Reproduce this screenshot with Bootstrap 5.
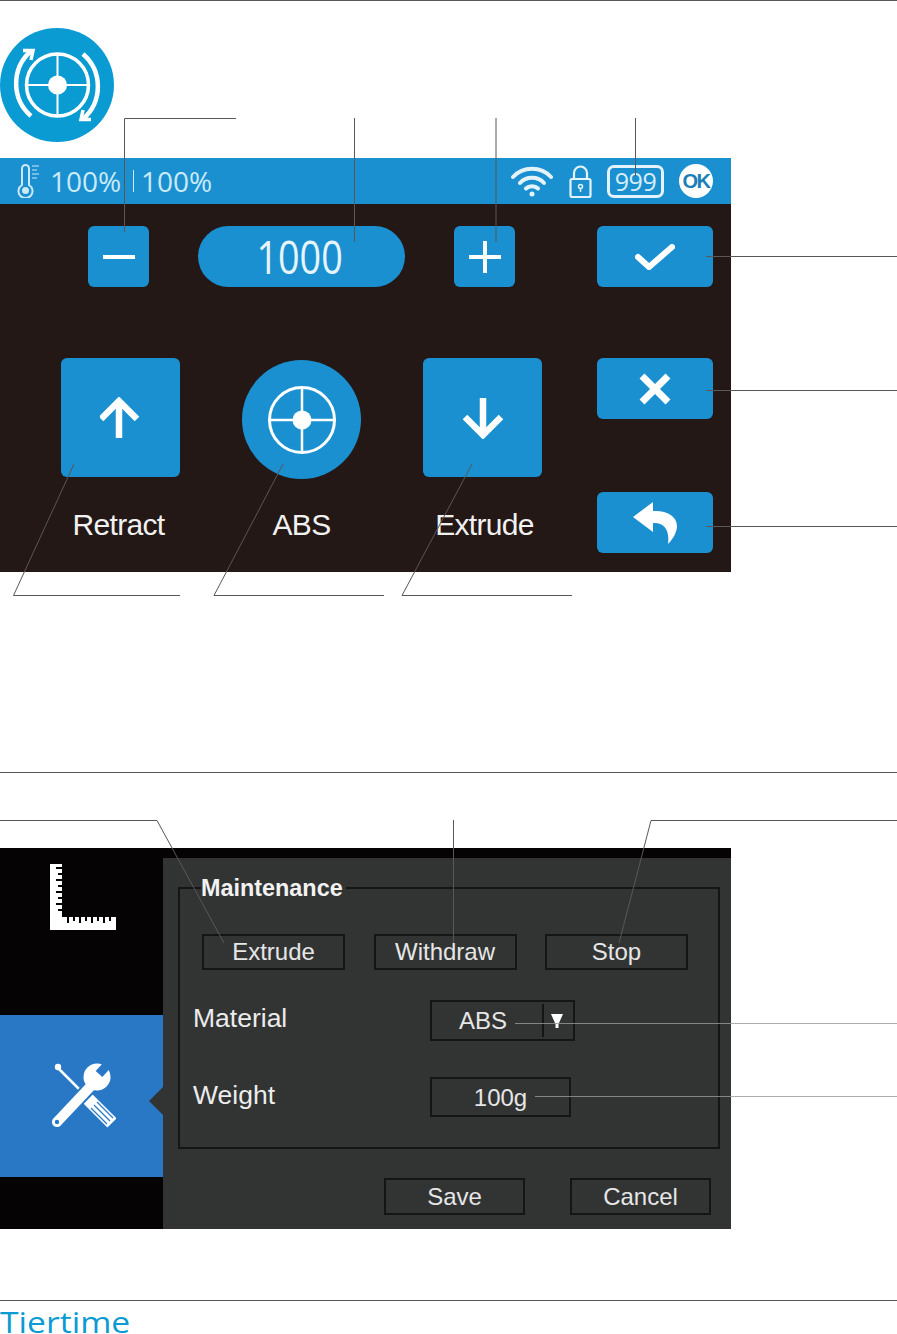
<!doctype html>
<html lang="en">
<head>
<meta charset="utf-8">
<title>Tiertime manual page</title>
<link href="https://cdn.jsdelivr.net/npm/bootstrap@5.3.0/dist/css/bootstrap.min.css" rel="stylesheet">
<style>
html,body{margin:0;background:#fff;}
body{width:897px;height:1334px;overflow:hidden;font-family:"Liberation Sans",Arial,sans-serif;}
.sheet{width:897px;height:1334px;overflow:hidden;}
.rule{height:1px;margin:0;border:0;background:#595757;opacity:1;}
.rule-a{margin-top:200px;}
.rule-b{margin-top:71px;}
.brand-mark{display:block;width:114px;height:114px;margin-top:27px;margin-bottom:16px;}
.leaders{top:0;left:0;width:897px;height:1334px;pointer-events:none;}

/* touch screen */
.touch{width:731px;height:414px;background:#231815;color:#fff;}
.status{height:46px;background:#1a90d0;color:#cbe9f7;padding-left:17px;padding-right:18px;font-family:"Open Sans",sans-serif;font-weight:400;font-size:28px;line-height:46px;}
.pct{width:72px;margin-left:10px;white-space:nowrap;}
.pct-sep{width:1px;height:22px;background:#cbe9f7;margin:0 -3px 0 11px;}
.count{width:57px;height:33px;border:3px solid #e4f3fa;border-radius:7px;font-family:"Open Sans",sans-serif;font-weight:400;font-size:25px;line-height:26px;text-align:center;color:#d7eef8;margin-left:15px;letter-spacing:-.5px;}
.okdot{width:34px;height:34px;border-radius:50%;background:#fff;color:#1a7fb8;font-family:"Liberation Sans",sans-serif;font-weight:700;font-size:20px;line-height:34px;text-align:center;margin-left:15px;letter-spacing:-1.5px;}
.left-pane{width:597px;padding-top:22px;}
.top-row{padding-left:88px;column-gap:49px;}
.tbtn{padding:0;border:0;background:#1a90d0;border-radius:6px;color:#fff;height:61px;display:flex;align-items:center;justify-content:center;}
.tbtn:hover,.tbtn:active{background:#1a90d0;color:#fff;}
.sq{width:61px;}
.wide{width:116px;}
.pill{width:207px;height:61px;border-radius:31px;background:#1a90d0;color:#e6f4fb;font-family:"Open Sans",sans-serif;font-weight:400;font-size:46px;line-height:61px;text-align:center;padding-right:3px;}
.pill-num{display:inline-block;transform:scaleX(.82);}
.tiles{margin-top:71px;padding-left:61px;column-gap:62px;}
.tile-col{width:119px;}
.tile{width:119px;height:119px;}
.round{border-radius:50%;margin-top:2px;margin-bottom:-2px;}
.tile-label{font-size:30px;line-height:36px;margin-top:30px;letter-spacing:-.7px;text-align:center;color:#f1f1f1;white-space:nowrap;}
.right-pane{padding-top:22px;}
.gap-x{margin-top:71px;}
.gap-back{margin-top:73px;}

/* desktop dialog */
.dialog{width:731px;height:381px;margin-top:75px;background:#323434;color:#e8e8e8;}
.rail{width:163px;background:#050303;}
.rail-top{height:167px;padding:16px 0 0 50px;}
.rail-on{height:162px;background:#2878c5;position:relative;padding:46px 0 0 50px;}
.rail-on::after{content:"";position:absolute;right:0;top:72px;border:14px solid transparent;border-right-color:#323434;border-left:0;}
.pane{border-top:10px solid #050303;}
.group{width:542px;height:273px;margin:18px 0 0 15px;padding:0 0 30px 13px;border:2px solid #151515;}
.group legend{float:none;width:auto;margin:0 0 34px 8px;padding:0 3px 0 0;font-size:23.4px;font-weight:700;line-height:24px;color:#f2f2f2;}
.cmd-row{padding-left:9px;column-gap:28.500px;}
.dbtn{width:143px;height:36px;padding:0;border:2px solid #151515;border-radius:0;background:transparent;color:#e6e6e6;font-size:24px;line-height:32px;}
.dbtn:hover,.dbtn:active{background:transparent;color:#e6e6e6;border-color:#151515;}
.fld-label{width:237px;font-size:26.5px;line-height:36px;color:#ececec;}
.fld{height:41px;border:2px solid #151515;font-size:24px;line-height:37px;text-align:center;color:#e6e6e6;}
.pick-row{margin-top:30px;}
.entry-row{margin-top:36px;}
.pick{width:145px;}
.pick-val{width:110px;padding-right:8px;}
.pick-arrow{flex:1;height:33px;margin-top:2px;border-left:2px solid #151515;padding-right:3px;}
.entry{width:141px;height:40px;}
.foot{margin:29px 20px 0 0;column-gap:45px;}
.foot .dbtn{height:37px;width:141px;}
.wordmark{color:#0a9bd2;font-family:"Open Sans",sans-serif;font-weight:400;font-size:29px;line-height:22px;height:22px;margin-top:10px;transform:scaleX(1.16);transform-origin:left center;}
</style>
</head>
<body>
<div class="sheet position-relative">
  <hr class="rule">
  <svg class="brand-mark" viewBox="0 0 114 114">
    <circle cx="57" cy="57" r="57" fill="#0a9bd2"/>
    <g fill="none" stroke="#fff">
      <circle cx="57.500" cy="57" r="31" stroke-width="3.500"/>
      <path d="M57.500 26V88M26 57H89" stroke-width="2"/>
      <g>
        <path d="M31 88A43 43 0 0 1 31 23" stroke-width="4.500"/>
        <path d="M23 22.500L33 22.500L31 32" stroke-width="3.500"/>
      </g>
      <g transform="rotate(180 57 57)">
        <path d="M31 88A43 43 0 0 1 31 23" stroke-width="4.500"/>
        <path d="M23 22.500L33 22.500L31 32" stroke-width="3.500"/>
      </g>
    </g>
    <circle cx="57.500" cy="57" r="9.500" fill="#fff"/>
  </svg>

  <section class="touch">
    <div class="status d-flex align-items-center">
      <svg width="23" height="34" viewBox="0 0 23 34" fill="none" stroke="#cbe9f7" stroke-width="2"><path d="M5 21V4.500a3.500 3.500 0 0 1 7 0V21a7 7 0 1 1-7 0z"/><circle cx="8.500" cy="26.500" r="3.500" fill="#cbe9f7" stroke="none"/><path d="M15 2h7M15 6h5M15 10h7M15 14h5" stroke-width="1.200"/></svg>
      <span class="pct">100%</span><span class="pct-sep"></span><span class="pct">100%</span>
      <span class="ms-auto d-flex align-items-center">
        <svg width="42" height="32" viewBox="0 0 42 32" fill="none" stroke="#e4f3fa" stroke-width="4" stroke-linecap="round"><path d="M2 12C12 1 30 1 40 12"/><path d="M9 18C15 11 27 11 33 18"/><path d="M15 23.500C18 20.500 24 20.500 27 23.500"/><circle cx="21" cy="29" r="2.500" fill="#e4f3fa" stroke="none"/></svg>
        <svg class="ms-3" width="23" height="33" viewBox="0 0 23 33" fill="none" stroke="#e4f3fa" stroke-width="2.200"><rect x="1.500" y="14" width="20" height="18" rx="1.500"/><path d="M5 14V8a6.500 6.500 0 0 1 13 0v6"/><circle cx="11.500" cy="21.500" r="2" stroke-width="1.500"/><path d="M11.500 23.500V27" stroke-width="1.500"/></svg>
        <span class="count">999</span>
        <span class="okdot">OK</span>
      </span>
    </div>
    <div class="d-flex">
      <div class="left-pane">
        <div class="d-flex top-row">
          <button class="btn tbtn sq" type="button" aria-label="Less"><svg width="32" height="4"><rect width="32" height="4" fill="#fff"/></svg></button>
          <div class="pill"><span class="pill-num">1000</span></div>
          <button class="btn tbtn sq" type="button" aria-label="More"><svg width="32" height="32"><path d="M0 16H32M16 0V32" stroke="#fff" stroke-width="4"/></svg></button>
        </div>
        <div class="d-flex tiles">
          <div class="tile-col">
            <button class="btn tbtn tile" type="button" aria-label="Retract"><svg width="42" height="42" viewBox="2 0 42 42" fill="none" stroke="#fff" stroke-width="6.500"><path d="M21 41V5"/><path d="M3 22L21 4L39 22"/></svg></button>
            <div class="tile-label pe-1">Retract</div>
          </div>
          <div class="tile-col">
            <button class="btn tbtn tile round" type="button" aria-label="ABS"><svg width="70" height="70" viewBox="0 0 70 70" fill="none" stroke="#fff"><circle cx="35" cy="35" r="32.500" stroke-width="3"/><path d="M35 3V67M3 35H67" stroke-width="2.500"/><circle cx="35" cy="35" r="9.500" fill="#fff" stroke="none"/></svg></button>
            <div class="tile-label">ABS</div>
          </div>
          <div class="tile-col">
            <button class="btn tbtn tile" type="button" aria-label="Extrude"><svg width="42" height="42" viewBox="0 0 42 42" fill="none" stroke="#fff" stroke-width="6.500"><path d="M21 1V37"/><path d="M3 20L21 38L39 20"/></svg></button>
            <div class="tile-label ps-1">Extrude</div>
          </div>
        </div>
      </div>
      <div class="right-pane">
        <button class="btn tbtn wide" type="button" aria-label="Confirm"><svg width="40" height="26" viewBox="0 0 40 26" fill="none" stroke="#fff" stroke-width="6" stroke-linecap="round"><path d="M3 13L14 23L37 3"/></svg></button>
        <button class="btn tbtn wide gap-x" type="button" aria-label="Close"><svg width="32" height="32" viewBox="0 0 32 32" stroke="#fff" stroke-width="7"><path d="M3 3L29 29M29 3L3 29"/></svg></button>
        <button class="btn tbtn wide gap-back" type="button" aria-label="Back"><svg width="44" height="42" viewBox="0 0 44 42"><path fill="#fff" d="M20 0L0 15L20 30V21C30 20 37 27 35 42C41 36 44 29 44 24C44 14 33 8 20 9Z"/></svg></button>
      </div>
    </div>
  </section>

  <hr class="rule rule-a">

  <section class="dialog d-flex">
    <div class="rail">
      <div class="rail-top">
        <svg class="d-block" width="66" height="66" viewBox="0 0 66 66"><path fill="#fff" d="M0 0H12V53H66V66H0Z"/><path stroke="#050303" stroke-width="2" d="M6 4H12M8 10H12M6 16H12M8 22H12M6 28H12M8 34H12M6 40H12M8 46H12M18 53V59M24 53V57M30 53V59M36 53V57M42 53V59M48 53V57M54 53V59M60 53V57" fill="none"/></svg>
      </div>
      <div class="rail-on">
        <svg class="d-block" width="66" height="70" viewBox="0 0 66 70">
          <path d="M9 8L38 37" stroke="#fff" stroke-width="2.500"/><circle cx="8" cy="6" r="3.200" fill="#fff"/>
          <path d="M38 38L62 62" stroke="#fff" stroke-width="13"/>
          <path d="M47 41L63 57M44 44L60 60M41 47L57 63" stroke="#2878c5" stroke-width="1.200"/>
          <path d="M7 61L40 26" stroke="#2878c5" stroke-width="14"/>
          <path d="M7 61L40 26" stroke="#fff" stroke-width="10" stroke-linecap="round"/>
          <circle cx="47" cy="16" r="13.500" fill="#fff"/>
          <path d="M49 13L60 1" stroke="#2878c5" stroke-width="9"/>
          <circle cx="7" cy="61" r="2.200" fill="#2878c5"/>
        </svg>
      </div>
    </div>
    <div class="pane flex-grow-1">
      <fieldset class="group">
        <legend>Maintenance</legend>
        <div class="d-flex cmd-row">
          <button class="btn dbtn" type="button">Extrude</button>
          <button class="btn dbtn" type="button">Withdraw</button>
          <button class="btn dbtn" type="button">Stop</button>
        </div>
        <div class="d-flex pick-row">
          <div class="fld-label">Material</div>
          <div class="fld pick d-flex"><span class="pick-val">ABS</span><span class="pick-arrow d-flex align-items-center justify-content-center"><svg width="12" height="14" viewBox="0 0 12 14"><path fill="#fff" d="M0 0H12L8 9H7.500V14H4.500V9H4Z"/></svg></span></div>
        </div>
        <div class="d-flex entry-row">
          <div class="fld-label">Weight</div>
          <div class="fld entry">100g</div>
        </div>
      </fieldset>
      <div class="d-flex justify-content-end foot">
        <button class="btn dbtn" type="button">Save</button>
        <button class="btn dbtn" type="button">Cancel</button>
      </div>
    </div>
  </section>

  <hr class="rule rule-b">
  <div class="wordmark">Tiertime</div>

  <svg class="leaders position-absolute" viewBox="0 0 897 1334" fill="none">
    <g stroke="#595757" stroke-width="1">
      <path d="M236 118.500H124.500V232"/>
      <path d="M354.500 118V242"/>
      <path d="M496 118V242"/>
      <path d="M635.500 118V176"/>
      <path d="M706 256.500H897"/>
      <path d="M706 390.500H897"/>
      <path d="M706 526.500H897"/>
      <path d="M74 464L13.500 595.500H180"/>
      <path d="M283 464L214 595.500H384"/>
      <path d="M472 464L402 595.500H572"/>
      <path d="M0 820.500H157L224 943"/>
      <path d="M453.500 820V943"/>
      <path d="M897 820.500H651L619 943"/>
    </g>
    <g stroke="#9a9a9a" stroke-width=".8">
      <path d="M515 1023.500H897"/>
      <path d="M535 1096.500H897"/>
    </g>
  </svg>
</div>
<script src="https://cdn.jsdelivr.net/npm/bootstrap@5.3.0/dist/js/bootstrap.bundle.min.js"></script>
</body>
</html>
